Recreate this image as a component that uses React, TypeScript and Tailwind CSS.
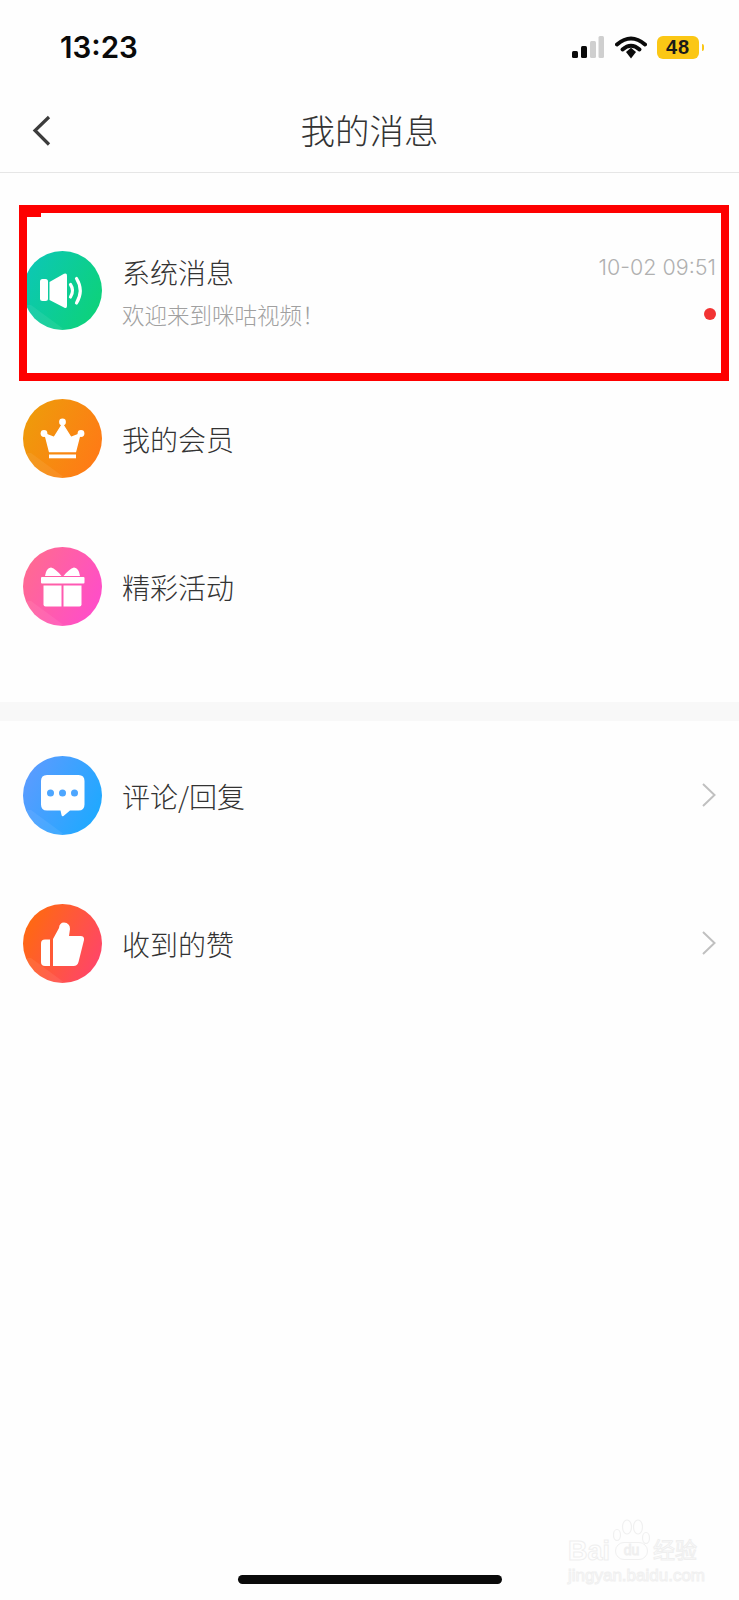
import React from "react";

const FONT = "font-['Noto_Sans_CJK_SC','Liberation_Sans',sans-serif]";

function Badge({ id, from, to, children }: { id: string; from: string; to: string; children: React.ReactNode }) {
  return (
    <svg width="79" height="79" viewBox="0 0 79 79" className="shrink-0">
      <defs>
        <linearGradient id={id} x1="0" y1="0.2" x2="1" y2="0.7">
          <stop offset="0" stopColor={from} />
          <stop offset="1" stopColor={to} />
        </linearGradient>
        <clipPath id={`${id}-c`}>
          <circle cx="39.5" cy="39.5" r="39.5" />
        </clipPath>
      </defs>
      <circle cx="39.5" cy="39.5" r="39.5" fill={`url(#${id})`} />
      <polygon points="8,54 42,79 0,79 0,54" fill="#fff" opacity="0.07" clipPath={`url(#${id}-c)`} />
      {children}
    </svg>
  );
}

const Speaker = () => (
  <Badge id="g1" from="#0cc7b6" to="#0dd27a">
    <rect x="17" y="28" width="8" height="22" rx="2.5" fill="#fff" />
    <path d="M26.5 31 L41 22.8 Q44 21.5 44 24.5 V55 Q44 58 41 56.5 L26.5 49 Z" fill="#fff" />
    <path d="M47.5 33.5 Q51.5 39.5 47.5 46" stroke="#fff" strokeWidth="3.2" strokeLinecap="round" fill="none" />
    <path d="M53.5 27.5 Q61 39.5 53.5 52" stroke="#fff" strokeWidth="3.2" strokeLinecap="round" fill="none" />
  </Badge>
);

const Crown = () => (
  <Badge id="g2" from="#ee9c0a" to="#ff7a16">
    <circle cx="39.5" cy="23" r="3.4" fill="#fff" />
    <circle cx="21" cy="34.5" r="3.4" fill="#fff" />
    <circle cx="58" cy="34.5" r="3.4" fill="#fff" />
    <path d="M22 35 L31 38.5 L39.5 25 L48 38.5 L57 35 L52.5 52.5 H26.5 Z" fill="#fff" stroke="#fff" strokeWidth="1.4" strokeLinejoin="round" />
    <rect x="26" y="55.5" width="27" height="3.8" fill="#fff" />
  </Badge>
);

const Gift = () => (
  <Badge id="g3" from="#ff6b8f" to="#ff4dca">
    <path d="M22 29 Q23 21 28 20.5 Q33 22 38.5 29 Z" fill="#fff" />
    <path d="M57 29 Q56 21 51 20.5 Q46 22 40.5 29 Z" fill="#fff" />
    <rect x="18" y="30" width="43.5" height="6.5" rx="1" fill="#fff" />
    <path d="M20.5 38.5 H38.5 V59.5 H22.5 Q20.5 59.5 20.5 57.5 Z" fill="#fff" />
    <path d="M40.5 38.5 H58.5 V57.5 Q58.5 59.5 56.5 59.5 H40.5 Z" fill="#fff" />
  </Badge>
);

const Chat = () => (
  <Badge id="g4" from="#5d9bff" to="#1ea9ff">
    <path d="M24 19 H55.5 Q61.5 19 61.5 25 V48.5 Q61.5 54.5 55.5 54.5 H47 L40.5 60 Q39 61 38.5 59 L37.5 54.5 H24 Q18 54.5 18 48.5 V25 Q18 19 24 19 Z" fill="#fff" />
    <circle cx="27.5" cy="37" r="3.5" fill="#4da6ff" />
    <circle cx="39.5" cy="37" r="3.5" fill="#4da6ff" />
    <circle cx="51.5" cy="37" r="3.5" fill="#4da6ff" />
  </Badge>
);

const Thumb = () => (
  <Badge id="g5" from="#ff6b0c" to="#ff4569">
    <path d="M22 35.5 H27 V62 H22 Q18 62 18 58 V39.5 Q18 35.5 22 35.5 Z" fill="#fff" />
    <path d="M30 62 V35 L36 24 Q36.5 18.5 41 18.5 Q47 19 47 25 L46 32 H57.5 Q61.5 32 61 36 L55.5 58 Q54.5 62 50.5 62 Z" fill="#fff" />
  </Badge>
);

function Row({ icon, label, arrow }: { icon: React.ReactNode; label: string; arrow?: boolean }) {
  return (
    <div className="h-[148px] flex items-center pl-[23px] pr-[22px] gap-[20px]">
      {icon}
      <span className="flex-1 mt-[2px] text-[28px] leading-[40px] text-[#333333] font-light">{label}</span>
      {arrow && (
        <svg width="16" height="26" viewBox="0 0 16 26" fill="none">
          <path d="M2 2 L13.5 13 L2 24" stroke="#c0c0c0" strokeWidth="2" />
        </svg>
      )}
    </div>
  );
}

function StatusBar() {
  return (
    <div className="h-[92px] flex items-center justify-between pl-[60px] pr-[35px] pt-[2px]">
      <span className="font-['Inter',sans-serif] text-[29.5px] leading-[36px] font-semibold text-[#0a0a0a]">13:23</span>
      <div className="flex items-center font-['Liberation_Sans',sans-serif]">
        <svg width="32" height="22" viewBox="0 0 32 22" className="mr-[11px]">
          <rect x="0" y="15" width="6" height="7" rx="1.5" fill="#0a0a0a" />
          <rect x="9" y="10" width="6" height="12" rx="1.5" fill="#0a0a0a" />
          <rect x="18" y="5" width="6" height="17" rx="1.5" fill="#cfcfcf" />
          <rect x="26.5" y="0" width="5.5" height="22" rx="1.5" fill="#cfcfcf" />
        </svg>
        <svg width="32" height="23" viewBox="0 0 32 23" fill="none" className="mr-[10px]">
          <path d="M2 8.5 Q16 -3.5 30 8.5" stroke="#0a0a0a" strokeWidth="4" strokeLinecap="round" />
          <path d="M7.5 13.5 Q16 6 24.5 13.5" stroke="#0a0a0a" strokeWidth="4" strokeLinecap="round" />
          <path d="M11 16 L16 11.8 L21 16 L16 22.5 Z" fill="#0a0a0a" />
        </svg>
        <div className="w-[42px] h-[23px] rounded-[6px] bg-[#fbc715] flex items-center justify-center text-[20px] leading-none font-bold text-[#1a1a1a] tracking-[1px]">
          48
        </div>
        <div className="w-[2px] h-[7px] ml-[3px] rounded-r-[2px] bg-[#fbc715]" />
      </div>
    </div>
  );
}

function Watermark() {
  return (
    <div className="absolute left-[568px] top-[1518px] w-[132px] flex flex-col items-start text-transparent font-['Liberation_Sans','Noto_Sans_CJK_SC',sans-serif]">
      <svg width="40" height="32" viewBox="0 0 40 32" fill="none" stroke="#f0f0f0" strokeWidth="1.2" className="absolute left-[45px] top-0">
        <ellipse cx="4" cy="17" rx="3.5" ry="5.5" />
        <ellipse cx="14" cy="9" rx="4.5" ry="7" />
        <ellipse cx="25" cy="9" rx="4.5" ry="7" />
        <ellipse cx="33" cy="20" rx="3.5" ry="5.5" />
      </svg>
      <div className="mt-[20px] flex items-center gap-[5px] text-[27px] leading-[26px] font-bold [-webkit-text-stroke:1px_#efefef]">
        <span>Bai</span>
        <span className="text-[14px] w-[33px] h-[18px] rounded-full border border-[#f0f0f0] text-center leading-[15px] font-normal">du</span>
        <span className="text-[22px] font-normal">经验</span>
      </div>
      <div className="mt-[2px] text-[17px] leading-[20px] whitespace-nowrap [-webkit-text-stroke:1px_#f0f0f0]">
        jingyan.baidu.com
      </div>
    </div>
  );
}

export default function App() {
  return (
    <div className={`relative w-[739px] h-[1600px] overflow-hidden bg-[#fefefe] ${FONT}`}>
      <StatusBar />

      <div className="h-[80px] relative flex items-center justify-center border-b border-[#e6e6e6] box-content">
        <svg width="20" height="32" viewBox="0 0 20 32" fill="none" className="absolute left-[32px] top-[23px]">
          <path d="M17 2 L3 15.5 L17 29.5" stroke="#3c3c3c" strokeWidth="3.2" />
        </svg>
        <h1 className="mb-[6px] text-[34.5px] leading-[44px] text-[#333333] font-light">我的消息</h1>
      </div>

      <div className="pt-[43px]">
        <div className="h-[148px] flex items-center pl-[23px] pr-[23px] gap-[20px]">
          <Speaker />
          <div className="flex-1 flex flex-col">
            <span className="text-[28px] leading-[40px] text-[#333333] font-light">系统消息</span>
            <span className="mt-[7px] text-[22.5px] leading-[30px] text-[#a0a0a0] font-light">欢迎来到咪咕视频！</span>
          </div>
          <div className="self-stretch flex flex-col items-end pt-[36px]">
            <span className="font-['Inter',sans-serif] font-light text-[21.5px] leading-[30px] text-[#b0b0b0]">10-02 09:51</span>
            <span className="mt-[26px] w-[12px] h-[12px] rounded-full bg-[#f23333]" />
          </div>
        </div>
        <Row icon={<Crown />} label="我的会员" />
        <Row icon={<Gift />} label="精彩活动" />
      </div>

      <div className="mt-[42px] h-[19px] bg-[#f8f8f8]" />

      <Row icon={<Chat />} label="评论/回复" arrow />
      <Row icon={<Thumb />} label="收到的赞" arrow />

      {/* annotation box on top of the first row */}
      <div className="absolute left-[19px] top-[205px] w-[710px] h-[176px] border-[8px] border-[#fe0000]">
        <div className="w-[14px] h-[4px] bg-[#fe0000]" />
      </div>

      <Watermark />

      <div className="absolute left-[238px] top-[1575px] w-[264px] h-[9px] rounded-full bg-[#0a0a0a]" />
    </div>
  );
}
